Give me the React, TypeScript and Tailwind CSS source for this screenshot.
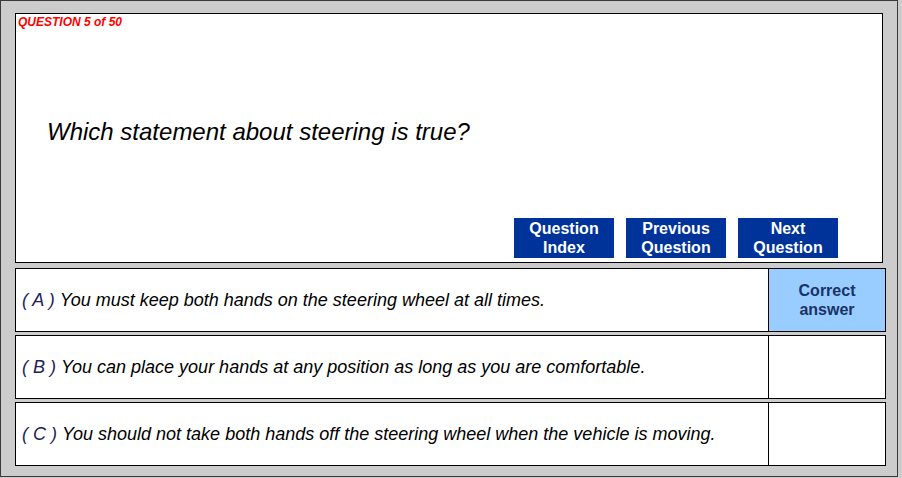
import React from 'react';

const answers = [
  { key: 'A', text: 'You must keep both hands on the steering wheel at all times.', correct: true },
  { key: 'B', text: 'You can place your hands at any position as long as you are comfortable.', correct: false },
  { key: 'C', text: 'You should not take both hands off the steering wheel when the vehicle is moving.', correct: false },
];

const NavButton: React.FC<{ top: string; bottom: string }> = ({ top, bottom }) => (
  <button className="w-[100px] h-[40px] bg-[#003399] text-white font-bold text-[16px] leading-[19px] flex flex-col items-center justify-center">
    <span>{top}</span>
    <span>{bottom}</span>
  </button>
);

const App: React.FC = () => {
  return (
    <div className="w-[902px] h-[478px] bg-[#cccccc] font-['Liberation_Sans',Arial,sans-serif]">
      <div className="w-[898px] h-[477px] border border-[#3a3a3a] pl-[14px] pt-[12px] flex flex-col">
        {/* question panel */}
        <div className="w-[868px] h-[250px] bg-white border border-black flex flex-col">
          <div className="pl-[2px] pt-[1px] text-[12px] leading-[14px] font-bold italic text-[#ff0000]">
            QUESTION 5 of 50
          </div>
          <div className="pl-[31px] pt-[89px] text-[24px] leading-[28px] italic text-black">
            Which statement about steering is true?
          </div>
          <div className="mt-auto mb-[4px] ml-[498px] flex gap-[12px]">
            <NavButton top="Question" bottom="Index" />
            <NavButton top="Previous" bottom="Question" />
            <NavButton top="Next" bottom="Question" />
          </div>
        </div>

        {/* answers */}
        <div className="mt-[5px] flex flex-col gap-[3px]">
          {answers.map((a) => (
            <div key={a.key} className="w-[871px] h-[64px] flex border border-black bg-white">
              <div className="flex-1 flex items-center pl-[6px] text-[18px] italic text-black border-r border-black">
                <span className="text-[#222255] mr-[5px]">( {a.key} )</span>
                {a.text}
              </div>
              <div
                className={
                  a.correct
                    ? 'w-[116px] flex flex-col items-center justify-center bg-[#99ccff] text-[#1a3366] font-bold text-[16px] leading-[19px]'
                    : 'w-[116px]'
                }
              >
                {a.correct && (
                  <>
                    <span>Correct</span>
                    <span>answer</span>
                  </>
                )}
              </div>
            </div>
          ))}
        </div>
      </div>
    </div>
  );
};

export default App;
